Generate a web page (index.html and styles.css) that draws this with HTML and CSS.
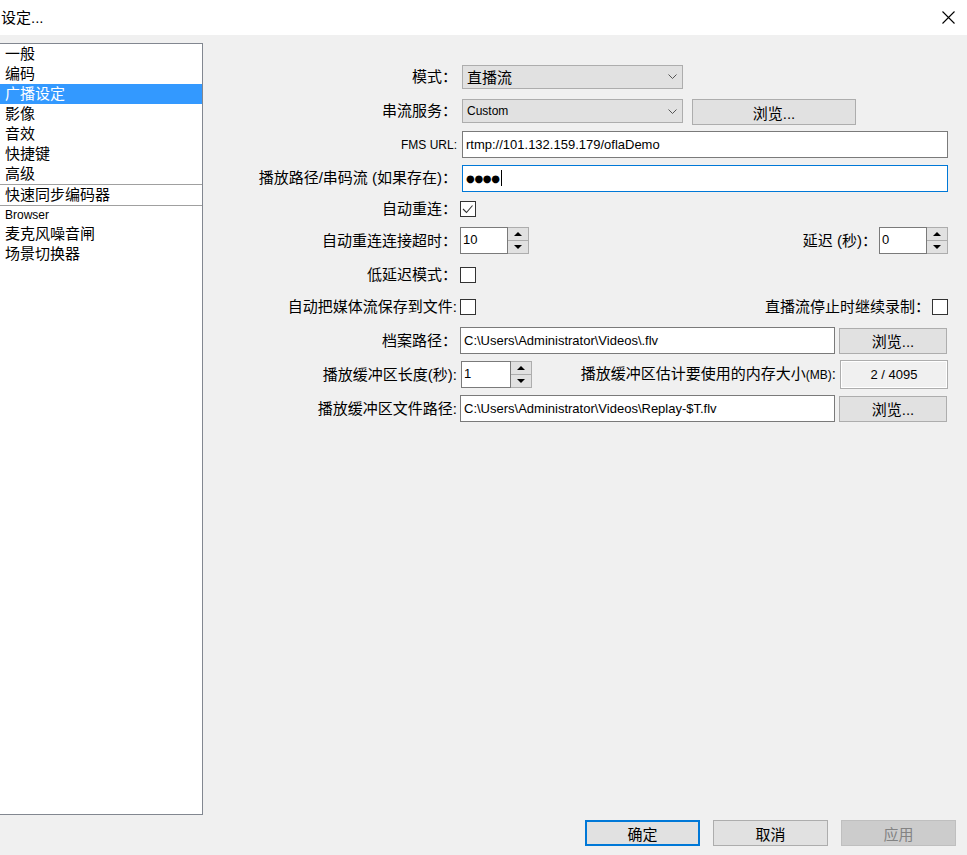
FILE: index.html
```html
<!DOCTYPE html>
<html lang="zh-CN">
<head>
<meta charset="utf-8">
<title>设定...</title>
<link rel="stylesheet" href="styles.css">
</head>
<body>
<div class="window">
  <header class="titlebar">
    <span class="title">设定...</span>
    <svg class="close" viewBox="0 0 13 13"><path d="M0.5 0.5 L12.5 12.5 M12.5 0.5 L0.5 12.5" stroke="#000" stroke-width="1.1" fill="none"/></svg>
  </header>
  <div class="main">
    <div class="content">
      <ul class="nav">
        <li class="nav-item">一般</li>
        <li class="nav-item">编码</li>
        <li class="nav-item is-active">广播设定</li>
        <li class="nav-item">影像</li>
        <li class="nav-item">音效</li>
        <li class="nav-item">快捷键</li>
        <li class="nav-item">高级</li>
        <li class="nav-sep"></li>
        <li class="nav-item">快速同步编码器</li>
        <li class="nav-sep"></li>
        <li class="nav-item is-latin">Browser</li>
        <li class="nav-item">麦克风噪音闸</li>
        <li class="nav-item">场景切换器</li>
      </ul>
      <div class="form">
        <div class="row">
          <span class="label">模式：</span>
          <div class="select"><span>直播流</span><svg class="chev" viewBox="0 0 9 5"><polyline points="0.5,0.5 4.5,4.5 8.5,0.5" fill="none" stroke="#555" stroke-width="1"/></svg></div>
        </div>
        <div class="row">
          <span class="label">串流服务：</span>
          <div class="select"><span class="select-latin">Custom</span><svg class="chev" viewBox="0 0 9 5"><polyline points="0.5,0.5 4.5,4.5 8.5,0.5" fill="none" stroke="#555" stroke-width="1"/></svg></div>
          <div class="btn btn-wide">浏览...</div>
        </div>
        <div class="row">
          <span class="label label-latin">FMS URL:</span>
          <div class="field field-shift">rtmp://101.132.159.179/oflaDemo</div>
        </div>
        <div class="row">
          <span class="label">播放路径/串码流 (如果存在)：</span>
          <div class="field field-shift is-focus"><span class="dots">●●●●</span><span class="caret"></span></div>
        </div>
        <div class="row">
          <span class="label">自动重连：</span>
          <div class="check"><svg viewBox="0 0 14 14"><polyline points="2,7 5.5,10.5 11.5,3.5" fill="none" stroke="#333" stroke-width="1.1"/></svg></div>
        </div>
        <div class="row">
          <span class="label">自动重连连接超时：</span>
          <div class="spin">
            <div class="spin-value">10</div>
            <div class="spin-btns">
              <div class="spin-btn"><svg viewBox="0 0 8 4"><path d="M0 4 L4 0 L8 4Z" fill="#000"/></svg></div>
              <div class="spin-btn"><svg viewBox="0 0 8 4"><path d="M0 0 L4 4 L8 0Z" fill="#000"/></svg></div>
            </div>
          </div>
          <span class="label-r">延迟 (秒)：</span>
          <div class="spin spin-r">
            <div class="spin-value">0</div>
            <div class="spin-btns">
              <div class="spin-btn"><svg viewBox="0 0 8 4"><path d="M0 4 L4 0 L8 4Z" fill="#000"/></svg></div>
              <div class="spin-btn"><svg viewBox="0 0 8 4"><path d="M0 0 L4 4 L8 0Z" fill="#000"/></svg></div>
            </div>
          </div>
        </div>
        <div class="row">
          <span class="label">低延迟模式：</span>
          <div class="check"></div>
        </div>
        <div class="row">
          <span class="label">自动把媒体流保存到文件:</span>
          <div class="check"></div>
          <span class="label-r">直播流停止时继续录制：</span>
          <div class="check check-r"></div>
        </div>
        <div class="row">
          <span class="label">档案路径：</span>
          <div class="field field-path">C:\Users\Administrator\Videos\.flv</div>
          <div class="btn btn-path">浏览...</div>
        </div>
        <div class="row">
          <span class="label">播放缓冲区长度(秒):</span>
          <div class="spin spin-buf">
            <div class="spin-value">1</div>
            <div class="spin-btns">
              <div class="spin-btn"><svg viewBox="0 0 8 4"><path d="M0 4 L4 0 L8 4Z" fill="#000"/></svg></div>
              <div class="spin-btn"><svg viewBox="0 0 8 4"><path d="M0 0 L4 4 L8 0Z" fill="#000"/></svg></div>
            </div>
          </div>
          <span class="label-r">播放缓冲区估计要使用的内存大小<span class="small">(MB)</span>:</span>
          <div class="readout">2 / 4095</div>
        </div>
        <div class="row">
          <span class="label">播放缓冲区文件路径:</span>
          <div class="field field-path">C:\Users\Administrator\Videos\Replay-$T.flv</div>
          <div class="btn btn-path">浏览...</div>
        </div>
      </div>
    </div>
    <div class="footer">
      <div class="fbtn is-default">确定</div>
      <div class="fbtn">取消</div>
      <div class="fbtn is-disabled">应用</div>
    </div>
  </div>
</div>
</body>
</html>
```

FILE: styles.css
```css
* { box-sizing: border-box; }
html, body { margin: 0; padding: 0; }
body {
  width: 967px;
  height: 855px;
  overflow: hidden;
  background: #f0f0f0;
  color: #000;
  font-family: "Liberation Sans", "Noto Sans CJK SC", sans-serif;
  font-size: 15px;
}
.titlebar {
  height: 35px;
  background: #fff;
  display: flex;
  align-items: center;
  justify-content: space-between;
  padding: 0 12px 0 1px;
}
.title { font-size: 15px; line-height: 20px; }
.close { display: block; width: 13px; height: 13px; }

.main { padding-top: 8px; }
.content { display: flex; height: 772px; }

.nav {
  list-style: none;
  margin: 0 0 0 -1px;
  padding: 0;
  width: 204px;
  flex: none;
  background: #fff;
  border: 1px solid #828790;
}
.nav-item {
  height: 20px;
  line-height: 20px;
  padding-left: 5px;
  font-size: 15px;
  white-space: nowrap;
}
.nav-item.is-active { background: #3399ff; color: #fff; }
.nav-item.is-latin { font-size: 12px; height: 18px; line-height: 19px; }
.nav-sep { height: 1px; background: #a0a0a0; }

.form {
  flex: 1;
  display: grid;
  grid-template-rows: 35px 34px 33px 34px 27px 37px 31px 33px 35px 33px 35px;
  align-content: start;
  padding: 16px 19px 0 0;
}
.row { display: flex; align-items: center; min-width: 0; }
.label {
  width: 254px;
  flex: none;
  text-align: right;
  white-space: nowrap;
  line-height: 20px;
}
.label-latin { font-size: 12px; }
.label-r { margin-left: auto; white-space: nowrap; line-height: 20px; }
.small { font-size: 12px; }

.select {
  margin-left: 5px;
  width: 221px;
  height: 24px;
  background: #e1e1e1;
  border: 1px solid #adadad;
  display: flex;
  align-items: center;
  justify-content: space-between;
  padding: 0 5px 0 4px;
  flex: none;
}
.select-latin { font-size: 12px; }
.chev { width: 9px; height: 5px; display: block; }

.btn {
  background: #e1e1e1;
  border: 1px solid #adadad;
  display: flex;
  align-items: center;
  justify-content: center;
  height: 26px;
  flex: none;
}
.btn-wide { width: 164px; margin-left: 9px; margin-top: 2px; }
.btn-path { width: 108px; margin-left: 4px; }

.field {
  flex: 1;
  min-width: 0;
  height: 27px;
  background: #fff;
  border: 1px solid #7a7a7a;
  display: flex;
  align-items: center;
  padding-left: 3px;
  font-size: 13px;
  white-space: nowrap;
  overflow: hidden;
}
.field-shift { margin-left: 5px; }
.field-path { flex: none; width: 375px; margin-left: 3px; }
.field.is-focus { border-color: #0078d7; }
.dots { font-family: "DejaVu Sans", sans-serif; font-size: 10px; letter-spacing: -0.3px; }
.caret { width: 1px; height: 16px; background: #000; margin-left: 1px; }

.check {
  width: 16px;
  height: 16px;
  flex: none;
  margin-left: 3px;
  border: 1px solid #333;
  background: #fff;
}
.check svg { display: block; width: 14px; height: 14px; }
.check-r { margin-left: 2px; }

.spin { display: flex; width: 69px; height: 27px; margin-left: 3px; flex: none; }
.spin-r { margin-left: 2px; }
.spin-buf { width: 71px; margin-left: 4px; }
.spin-value {
  flex: 1;
  background: #fff;
  border: 1px solid #7a7a7a;
  font-size: 13px;
  padding: 3px 0 0 2px;
  line-height: 17px;
}
.spin-btns {
  width: 21px;
  display: flex;
  flex-direction: column;
  border: 1px solid #adadad;
  border-left: none;
}
.spin-btn {
  flex: 1;
  background: #e1e1e1;
  display: flex;
  align-items: center;
  justify-content: center;
}
.spin-btn + .spin-btn { border-top: 1px solid #adadad; }
.spin-btn svg { width: 8px; height: 4px; display: block; }

.readout {
  width: 108px;
  height: 29px;
  margin-left: 4px;
  flex: none;
  border: 1px solid #adadad;
  box-shadow: inset 0 0 0 1px #fff;
  display: flex;
  align-items: center;
  justify-content: center;
  font-size: 13px;
}

.footer {
  display: flex;
  justify-content: flex-end;
  gap: 13px;
  padding-right: 11px;
  margin-top: 5px;
}
.fbtn {
  width: 115px;
  height: 26px;
  background: #e1e1e1;
  border: 1px solid #adadad;
  display: flex;
  align-items: center;
  justify-content: center;
  font-size: 15px;
}
.fbtn.is-default { border: 2px solid #0078d7; }
.fbtn.is-disabled { background: #cccccc; border-color: #bfbfbf; color: #838383; }
```
